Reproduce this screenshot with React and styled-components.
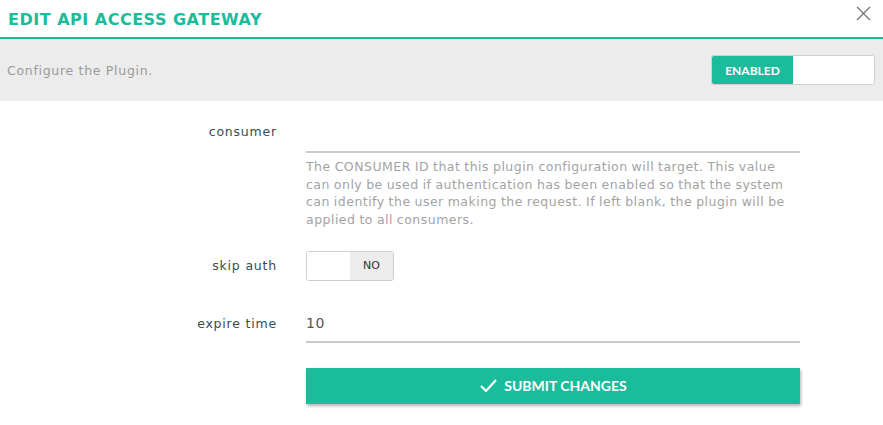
import React from "react";
import styled, { createGlobalStyle } from "styled-components";

const GlobalStyle = createGlobalStyle`
  body {
    margin: 0;
    background: #fff;
    font-family: "DejaVu Sans", "Noto Sans", sans-serif;
  }
`;

const Modal = styled.div`
  width: 883px;
  height: 425px;
  display: flex;
  flex-direction: column;
  background: #fff;
`;

const Header = styled.div`
  height: 37px;
  display: flex;
  align-items: center;
  justify-content: space-between;
  padding: 0 12px 0 8px;
  border-bottom: 2px solid #1abc9c;
`;

const Title = styled.h1`
  margin: 0;
  font-size: 16px;
  font-weight: bold;
  color: #1abc9c;
  letter-spacing: 0.5px;
  padding-top: 1px;
`;

const Close = styled.button`
  border: none;
  background: none;
  padding: 0;
  margin-top: -10px;
  display: flex;
  cursor: pointer;
`;

const Band = styled.div`
  height: 62px;
  background: #ececec;
  display: flex;
  align-items: center;
  justify-content: space-between;
  padding: 0 8px 0 7px;
`;

const BandText = styled.span`
  font-size: 12.5px;
  color: #9a9a9a;
  letter-spacing: 0.7px;
`;

const Switch = styled.div`
  display: flex;
  width: ${(p) => p.w}px;
  height: ${(p) => p.h}px;
  border: 1px solid #cfcfcf;
  border-radius: 3px;
  overflow: hidden;
  box-sizing: border-box;
  background: #fff;
`;

const SwitchPart = styled.div`
  flex: ${(p) => p.grow};
  display: flex;
  align-items: center;
  justify-content: center;
  font-size: ${(p) => p.fs}px;
  font-weight: ${(p) => (p.on ? "bold" : "normal")};
  color: ${(p) => (p.on ? "#fff" : "#333")};
  background: ${(p) => (p.on ? "#1abc9c" : p.muted ? "#ececec" : "#fff")};
  font-family: ${(p) => (p.on ? "Lato, sans-serif" : "inherit")};
`;

const Form = styled.div`
  display: flex;
  flex-direction: column;
  padding-top: 20px;
`;

const Row = styled.div`
  display: grid;
  grid-template-columns: 277px 494px;
  column-gap: 29px;
  margin-bottom: ${(p) => p.mb}px;
  align-items: ${(p) => p.align || "start"};
`;

const Label = styled.label`
  text-align: right;
  font-size: 12.5px;
  color: #3d4a4f;
  letter-spacing: 0.8px;
  padding-top: ${(p) => p.pt || 0}px;
`;

const Field = styled.div`
  display: flex;
  flex-direction: column;
`;

const Input = styled.input`
  border: none;
  border-bottom: 2px solid #c9c9c9;
  outline: none;
  height: ${(p) => p.h || 30}px;
  padding: 0;
  font-family: "DejaVu Sans", sans-serif;
  font-size: 14px;
  letter-spacing: 0.6px;
  color: #555;
  background: transparent;
`;

const Help = styled.p`
  margin: 5px 0 0;
  font-size: 12.5px;
  line-height: 17.7px;
  color: #a3a3a3;
  letter-spacing: 0.48px;
  word-spacing: -0.5px;
`;

const Submit = styled.button`
  width: 494px;
  height: 36px;
  border: none;
  background: #1abc9c;
  color: #fff;
  font-family: Lato, sans-serif;
  font-weight: bold;
  font-size: 14px;
  display: flex;
  align-items: center;
  justify-content: center;
  gap: 6px;
  box-shadow: 1px 2px 3px rgba(0, 0, 0, 0.3);
  cursor: pointer;
`;

export default function App() {
  return (
    <>
      <GlobalStyle />
      <Modal>
        <Header>
          <Title>EDIT API ACCESS GATEWAY</Title>
          <Close>
            <svg width="15" height="15" viewBox="0 0 15 15">
              <path d="M1 1 L14 14 M14 1 L1 14" stroke="#777" strokeWidth="1.4" />
            </svg>
          </Close>
        </Header>
        <Band>
          <BandText>Configure the Plugin.</BandText>
          <Switch w={164} h={30}>
            <SwitchPart grow={82} on fs={12}>
              ENABLED
            </SwitchPart>
            <SwitchPart grow={82} />
          </Switch>
        </Band>
        <Form>
          <Row mb={22}>
            <Label pt={3}>consumer</Label>
            <Field>
              <Input defaultValue="" />
              <Help>
                The CONSUMER ID that this plugin configuration will target. This value
                <br />
                can only be used if authentication has been enabled so that the system
                <br />
                can identify the user making the request. If left blank, the plugin will be
                <br />
                applied to all consumers.
              </Help>
            </Field>
          </Row>
          <Row mb={24} align="center">
            <Label>skip auth</Label>
            <Switch w={88} h={30}>
              <SwitchPart grow={44} />
              <SwitchPart grow={44} muted fs={11}>
                NO
              </SwitchPart>
            </Switch>
          </Row>
          <Row mb={25} align="center">
            <Label>expire time</Label>
            <Input h={36} defaultValue="10" />
          </Row>
          <Row mb={0}>
            <span />
            <Submit>
              <svg width="19" height="15" viewBox="0 0 19 15">
                <path d="M2 8 L7 13 L17 2" stroke="#fff" strokeWidth="2.2" fill="none" />
              </svg>
              SUBMIT CHANGES
            </Submit>
          </Row>
        </Form>
      </Modal>
    </>
  );
}
